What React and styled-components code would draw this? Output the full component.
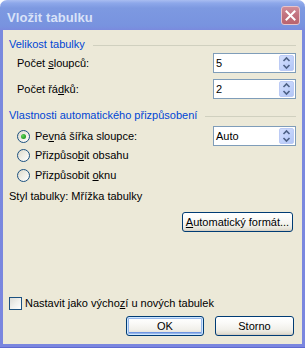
import React from "react";
import styled, { createGlobalStyle, css } from "styled-components";

const Global = createGlobalStyle`
  html, body { margin: 0; padding: 0; background: #ffffff; }
  body { font-family: "Liberation Sans", Arial, sans-serif; font-size: 11px; color: #000; }
`;

const Window = styled.div`
  width: 305px;
  height: 348px;
  box-sizing: border-box;
  display: flex;
  flex-direction: column;
  border-radius: 7px 7px 0 0;
  background: linear-gradient(180deg, #a9bdf1 0px, #8ea8ea 3px, #7d99e1 8px, #7893df 26px, #7a8ade 30px, #7a86df 100%);
  box-shadow: inset 0 -1px 0 #5f69cf;
  overflow: hidden;
`;

const TitleBar = styled.div`
  height: 30px;
  flex: none;
  display: flex;
  justify-content: space-between;
  padding: 0 5px 0 7px;
`;

const TitleText = styled.span`
  padding-top: 10px;
  font-family: "Liberation Sans", Arial, sans-serif;
  font-weight: bold;
  font-size: 13px;
  line-height: 15px;
  color: #d8e2f8;
  letter-spacing: 0.1px;
`;

const CloseButton = styled.div`
  margin-top: 6px;
  width: 19px;
  height: 19px;
  box-sizing: border-box;
  border: 1px solid #e6c4cb;
  border-radius: 3px;
  background: linear-gradient(180deg, #d08d98 0%, #c3737f 45%, #b9636f 100%);
  display: flex;
  align-items: center;
  justify-content: center;
`;

const Body = styled.div`
  flex: 1;
  margin: 0 3px 4px 3px;
  background: #ece9d8;
  padding: 8px 6px 8px 6px;
  display: flex;
  flex-direction: column;
`;

const GroupHeader = styled.div`
  display: flex;
  align-items: center;
  height: 13px;
  line-height: 13px;
  color: #0046d5;
  margin-top: ${(p) => p.$top || 0}px;
  &::after {
    content: "";
    flex: 1;
    height: 1px;
    background: #d0d0bf;
    margin-left: 8px;
    margin-top: 1px;
  }
`;

const FieldRow = styled.div`
  display: flex;
  align-items: center;
  justify-content: space-between;
  height: ${(p) => p.$h || 20}px;
  margin-top: ${(p) => p.$top || 0}px;
  padding-left: ${(p) => p.$indent ?? 8}px;
`;

const Label = styled.span`
  line-height: 13px;
  white-space: nowrap;
`;

const Acc = styled.u`
  text-decoration: underline;
  text-underline-offset: 1px;
`;

const SpinBox = styled.div`
  width: 83px;
  height: ${(p) => p.$h || 20}px;
  box-sizing: border-box;
  border: 1px solid #7f9db9;
  background: #fff;
  display: flex;
  align-items: stretch;
`;

const SpinValue = styled.span`
  flex: 1;
  padding-left: 2px;
  line-height: 18px;
  font-size: 11px;
`;

const SpinButton = styled.div`
  width: 15px;
  margin: 1px 1px 1px 0;
  box-sizing: border-box;
  border: 1px solid #bccbf5;
  border-radius: 2px;
  background: linear-gradient(135deg, #d3defb 0%, #c3d3fb 50%, #b2c6f6 100%);
  display: flex;
  align-items: center;
  justify-content: center;
`;

const RadioRow = styled.div`
  display: flex;
  align-items: center;
  justify-content: space-between;
  height: ${(p) => p.$h || 20}px;
  padding-left: 8px;
`;

const RadioLabel = styled.label`
  display: flex;
  align-items: center;
  gap: 5px;
  line-height: 13px;
  white-space: nowrap;
`;

const Radio = styled.span`
  width: 13px;
  height: 13px;
  box-sizing: border-box;
  border-radius: 50%;
  border: 1px solid #1c5180;
  background: linear-gradient(135deg, #dcd9cb 0%, #efeee6 50%, #ffffff 100%);
  display: flex;
  align-items: center;
  justify-content: center;
  flex: none;
  ${(p) =>
    p.$checked &&
    css`
      &::after {
        content: "";
        width: 5px;
        height: 5px;
        border-radius: 50%;
        background: radial-gradient(circle at 35% 35%, #63d45e 0%, #2ba52a 60%, #1c8b1c 100%);
      }
    `}
`;

const PlainText = styled.div`
  height: 13px;
  line-height: 13px;
  margin-top: ${(p) => p.$top || 0}px;
`;

const ButtonRow = styled.div`
  display: flex;
  justify-content: flex-end;
  gap: ${(p) => p.$gap || 0}px;
  margin-top: ${(p) => p.$top || 0}px;
  padding-right: ${(p) => p.$right || 0}px;
`;

const Button = styled.button`
  font-family: "Liberation Sans", Arial, sans-serif;
  font-size: 11px;
  color: #000;
  height: 20px;
  width: ${(p) => p.$w}px;
  padding: 0;
  box-sizing: border-box;
  border: 1px solid #003c74;
  border-radius: 3px;
  background: linear-gradient(180deg, #ffffff 0%, #fbfbf9 30%, #f1f0ea 70%, #e3e0d4 90%, #d6d0c5 100%);
  box-shadow: inset 0 -1px 0 #d6d0c5;
  line-height: 16px;
  ${(p) =>
    p.$default &&
    css`
      box-shadow: inset 0 0 0 1px #cee7ff, inset 0 0 0 2px #98b8ea, inset 0 -2px 0 1px #6f96e2;
    `}
`;

const CheckRow = styled.label`
  display: flex;
  align-items: center;
  gap: 3px;
  height: 13px;
  margin-top: auto;
  line-height: 13px;
`;

const CheckBox = styled.span`
  width: 13px;
  height: 13px;
  box-sizing: border-box;
  border: 1px solid #1c5180;
  background: linear-gradient(135deg, #dcdcd7 0%, #f0f0ec 50%, #ffffff 100%);
  flex: none;
`;

const SpinArrows = () => (
  <svg width="9" height="14" viewBox="0 0 9 14">
    <path d="M1.5 5 L4.5 2 L7.5 5" fill="none" stroke="#4d6185" strokeWidth="1.6" />
    <path d="M1.5 9 L4.5 12 L7.5 9" fill="none" stroke="#4d6185" strokeWidth="1.6" />
  </svg>
);

const Spin = ({ value, h }) => (
  <SpinBox $h={h}>
    <SpinValue>{value}</SpinValue>
    <SpinButton>
      <SpinArrows />
    </SpinButton>
  </SpinBox>
);

export default function App() {
  return (
    <>
      <Global />
      <Window>
        <TitleBar>
          <TitleText>Vložit tabulku</TitleText>
          <CloseButton>
            <svg width="11" height="11" viewBox="0 0 11 11">
              <path d="M1.5 1.5 L9.5 9.5 M9.5 1.5 L1.5 9.5" stroke="#ffffff" strokeWidth="2" strokeLinecap="square" />
            </svg>
          </CloseButton>
        </TitleBar>
        <Body>
          <GroupHeader>Velikost tabulky</GroupHeader>
          <FieldRow $top={2}>
            <Label>
              Počet <Acc>s</Acc>loupců:
            </Label>
            <Spin value="5" />
          </FieldRow>
          <FieldRow $top={6}>
            <Label>
              Počet řá<Acc>d</Acc>ků:
            </Label>
            <Spin value="2" />
          </FieldRow>

          <GroupHeader $top={10}>Vlastnosti automatického přizpůsobení</GroupHeader>
          <RadioRow $h={20} style={{ marginTop: 4 }}>
            <RadioLabel>
              <Radio $checked />
              <span>
                Pe<Acc>v</Acc>ná šířka sloupce:
              </span>
            </RadioLabel>
            <Spin value="Auto" />
          </RadioRow>
          <RadioRow $h={19}>
            <RadioLabel>
              <Radio />
              <span>
                Přizpůso<Acc>b</Acc>it obsahu
              </span>
            </RadioLabel>
          </RadioRow>
          <RadioRow $h={20}>
            <RadioLabel>
              <Radio />
              <span>
                Přizpůsobit <Acc>o</Acc>knu
              </span>
            </RadioLabel>
          </RadioRow>

          <PlainText $top={5}>Styl tabulky: Mřížka tabulky</PlainText>
          <ButtonRow $top={9} $right={3}>
            <Button $w={111}>
              <Acc>A</Acc>utomatický formát...
            </Button>
          </ButtonRow>

          <CheckRow>
            <CheckBox />
            <span>
              Nastavit jako výcho<Acc>z</Acc>í u nových tabulek
            </span>
          </CheckRow>
          <ButtonRow $top={6} $gap={11} $right={2}>
            <Button $w={78} $default>
              OK
            </Button>
            <Button $w={79}>Storno</Button>
          </ButtonRow>
        </Body>
      </Window>
    </>
  );
}
